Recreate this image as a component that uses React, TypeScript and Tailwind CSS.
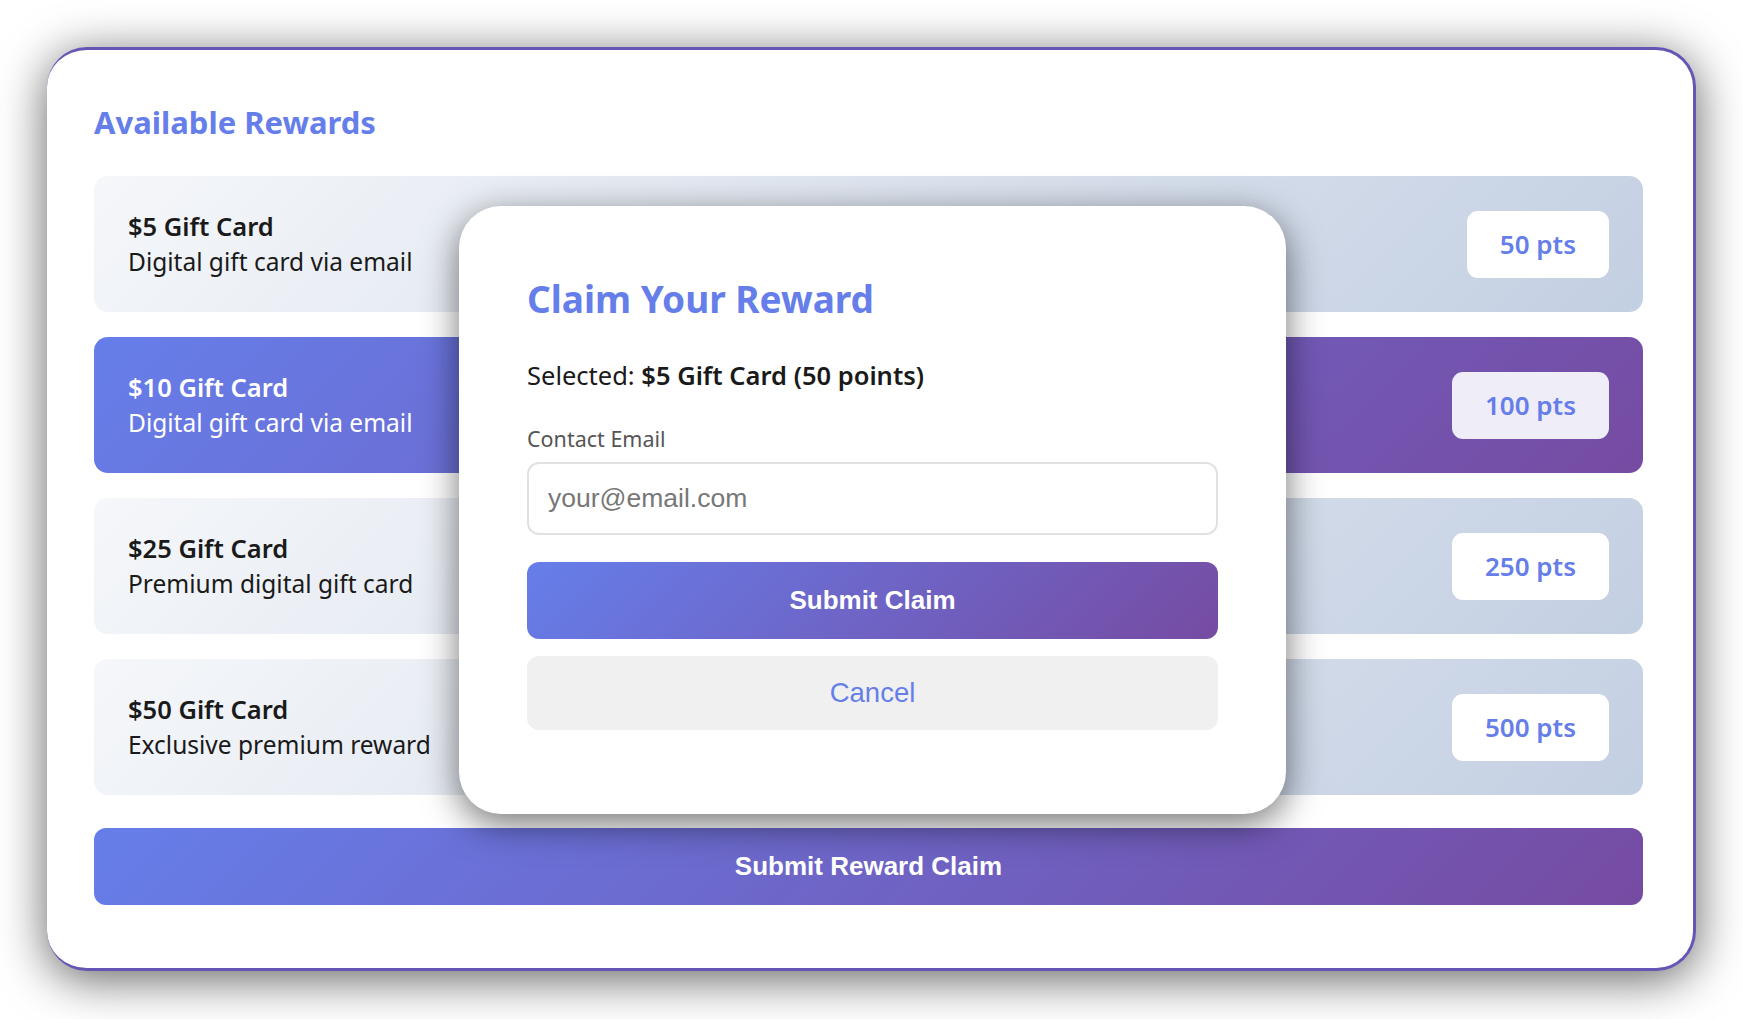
const rewards = [
  { title: "$5 Gift Card", desc: "Digital gift card via email", pts: "50 pts", selected: false },
  { title: "$10 Gift Card", desc: "Digital gift card via email", pts: "100 pts", selected: true },
  { title: "$25 Gift Card", desc: "Premium digital gift card", pts: "250 pts", selected: false },
  { title: "$50 Gift Card", desc: "Exclusive premium reward", pts: "500 pts", selected: false },
];

export default function App() {
  return (
    <div className="w-[1743px] h-[1019px] bg-white p-[47px] overflow-hidden font-['Noto_Sans',sans-serif]">
      <div className="relative h-[924px] rounded-[40px] bg-white border-t-[3px] border-r-[3px] border-b-[3px] border-[#6655b5] shadow-[0_8px_48px_rgba(0,0,0,0.62)] pl-[47px] pr-[50px] pt-[54px]">
        <h2 className="text-[31px] leading-[36px] font-bold text-[#667eea]">Available Rewards</h2>
        <div className="mt-[36px] flex flex-col gap-[25px]">
          {rewards.map((r) => (
            <div
              key={r.title}
              className={
                r.selected
                  ? "h-[136px] rounded-[14px] px-[34px] flex items-center justify-between bg-[linear-gradient(135deg,#667eea_0%,#764ba2_100%)] text-white"
                  : "h-[136px] rounded-[14px] px-[34px] flex items-center justify-between bg-[linear-gradient(135deg,#f5f7fa_0%,#c3cfe2_100%)] text-[#1a1a1a]"
              }
            >
              <div>
                <div className="text-[25.5px] leading-[35px] font-semibold">{r.title}</div>
                <div className="text-[24.5px] leading-[35px]">{r.desc}</div>
              </div>
              <div
                className={
                  r.selected
                    ? "h-[67px] px-[33px] rounded-[11px] bg-[#efedf8] flex items-center text-[26px] font-semibold text-[#667eea]"
                    : "h-[67px] px-[33px] rounded-[11px] bg-white flex items-center text-[26px] font-semibold text-[#667eea]"
                }
              >
                {r.pts}
              </div>
            </div>
          ))}
        </div>
        <button className="mt-[33px] w-full h-[77px] rounded-[12px] bg-[linear-gradient(135deg,#667eea_0%,#764ba2_100%)] text-white text-[26px] font-bold font-['Liberation_Sans',sans-serif]">
          Submit Reward Claim
        </button>

        <div className="absolute left-[412px] top-[156px] w-[827px] h-[608px] rounded-[42px] bg-white shadow-[0_10px_36px_rgba(0,0,0,0.55)] px-[68px] pt-[72px]">
          <h3 className="text-[37px] leading-[41px] font-bold text-[#667eea]">Claim Your Reward</h3>
          <p className="mt-[41px] text-[25.5px] leading-[30px] text-[#1a1a1a]">
            Selected: <span className="font-semibold">$5 Gift Card (50 points)</span>
          </p>
          <label className="block mt-[35px] text-[21.5px] leading-[28px] text-[#555]">Contact Email</label>
          <input
            className="mt-[9px] w-full h-[73px] rounded-[12px] border-2 border-[#e1e1e1] px-[19px] text-[26.5px] font-['Liberation_Sans',sans-serif] placeholder:text-[#777] outline-none"
            placeholder="your@email.com"
          />
          <button className="mt-[27px] w-full h-[77px] rounded-[12px] bg-[linear-gradient(135deg,#667eea_0%,#764ba2_100%)] text-white text-[26px] font-bold font-['Liberation_Sans',sans-serif]">
            Submit Claim
          </button>
          <button className="mt-[17px] w-full h-[74px] rounded-[12px] bg-[#f0f0f0] text-[#667eea] text-[27.5px] font-['Liberation_Sans',sans-serif]">
            Cancel
          </button>
        </div>
      </div>
    </div>
  );
}
